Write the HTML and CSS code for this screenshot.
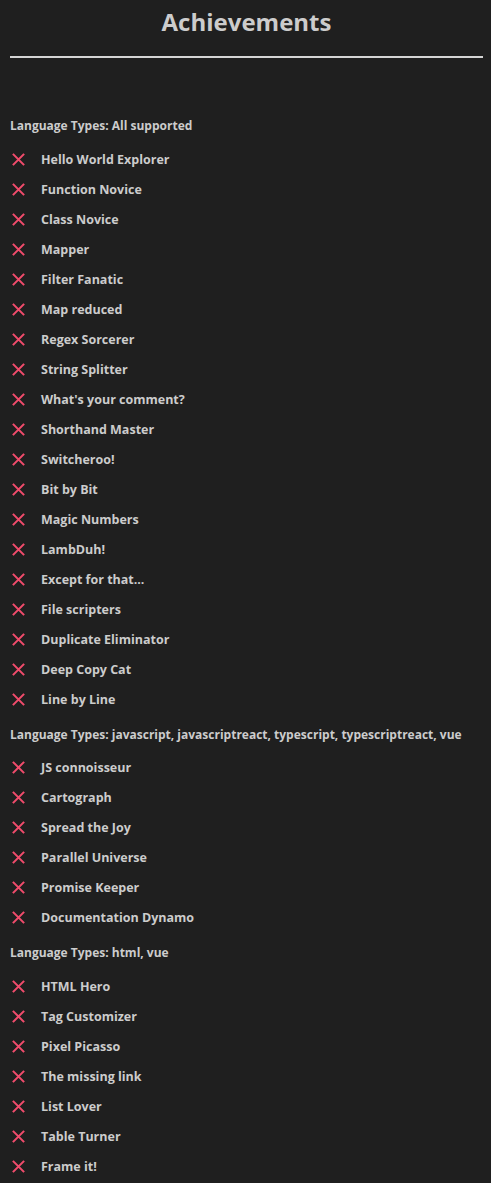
FILE: index.html
```html
<!DOCTYPE html>
<html>
<head>
<meta charset="utf-8">
<link rel="stylesheet" href="styles.css">
</head>
<body>
<main class="page">
  <h1 class="title">Achievements</h1>
  <div class="rule"></div>

  <section class="group">
    <h2 class="group-title">Language Types: All supported</h2>
    <ul class="list">
      <li class="item"><svg class="x" viewBox="0 0 16 16"><path d="M2 2l12 12M14 2L2 14"/></svg><span>Hello World Explorer</span></li>
      <li class="item"><svg class="x" viewBox="0 0 16 16"><path d="M2 2l12 12M14 2L2 14"/></svg><span>Function Novice</span></li>
      <li class="item"><svg class="x" viewBox="0 0 16 16"><path d="M2 2l12 12M14 2L2 14"/></svg><span>Class Novice</span></li>
      <li class="item"><svg class="x" viewBox="0 0 16 16"><path d="M2 2l12 12M14 2L2 14"/></svg><span>Mapper</span></li>
      <li class="item"><svg class="x" viewBox="0 0 16 16"><path d="M2 2l12 12M14 2L2 14"/></svg><span>Filter Fanatic</span></li>
      <li class="item"><svg class="x" viewBox="0 0 16 16"><path d="M2 2l12 12M14 2L2 14"/></svg><span>Map reduced</span></li>
      <li class="item"><svg class="x" viewBox="0 0 16 16"><path d="M2 2l12 12M14 2L2 14"/></svg><span>Regex Sorcerer</span></li>
      <li class="item"><svg class="x" viewBox="0 0 16 16"><path d="M2 2l12 12M14 2L2 14"/></svg><span>String Splitter</span></li>
      <li class="item"><svg class="x" viewBox="0 0 16 16"><path d="M2 2l12 12M14 2L2 14"/></svg><span>What's your comment?</span></li>
      <li class="item"><svg class="x" viewBox="0 0 16 16"><path d="M2 2l12 12M14 2L2 14"/></svg><span>Shorthand Master</span></li>
      <li class="item"><svg class="x" viewBox="0 0 16 16"><path d="M2 2l12 12M14 2L2 14"/></svg><span>Switcheroo!</span></li>
      <li class="item"><svg class="x" viewBox="0 0 16 16"><path d="M2 2l12 12M14 2L2 14"/></svg><span>Bit by Bit</span></li>
      <li class="item"><svg class="x" viewBox="0 0 16 16"><path d="M2 2l12 12M14 2L2 14"/></svg><span>Magic Numbers</span></li>
      <li class="item"><svg class="x" viewBox="0 0 16 16"><path d="M2 2l12 12M14 2L2 14"/></svg><span>LambDuh!</span></li>
      <li class="item"><svg class="x" viewBox="0 0 16 16"><path d="M2 2l12 12M14 2L2 14"/></svg><span>Except for that...</span></li>
      <li class="item"><svg class="x" viewBox="0 0 16 16"><path d="M2 2l12 12M14 2L2 14"/></svg><span>File scripters</span></li>
      <li class="item"><svg class="x" viewBox="0 0 16 16"><path d="M2 2l12 12M14 2L2 14"/></svg><span>Duplicate Eliminator</span></li>
      <li class="item"><svg class="x" viewBox="0 0 16 16"><path d="M2 2l12 12M14 2L2 14"/></svg><span>Deep Copy Cat</span></li>
      <li class="item"><svg class="x" viewBox="0 0 16 16"><path d="M2 2l12 12M14 2L2 14"/></svg><span>Line by Line</span></li>
    </ul>
  </section>

  <section class="group">
    <h2 class="group-title">Language Types: javascript, javascriptreact, typescript, typescriptreact, vue</h2>
    <ul class="list">
      <li class="item"><svg class="x" viewBox="0 0 16 16"><path d="M2 2l12 12M14 2L2 14"/></svg><span>JS connoisseur</span></li>
      <li class="item"><svg class="x" viewBox="0 0 16 16"><path d="M2 2l12 12M14 2L2 14"/></svg><span>Cartograph</span></li>
      <li class="item"><svg class="x" viewBox="0 0 16 16"><path d="M2 2l12 12M14 2L2 14"/></svg><span>Spread the Joy</span></li>
      <li class="item"><svg class="x" viewBox="0 0 16 16"><path d="M2 2l12 12M14 2L2 14"/></svg><span>Parallel Universe</span></li>
      <li class="item"><svg class="x" viewBox="0 0 16 16"><path d="M2 2l12 12M14 2L2 14"/></svg><span>Promise Keeper</span></li>
      <li class="item"><svg class="x" viewBox="0 0 16 16"><path d="M2 2l12 12M14 2L2 14"/></svg><span>Documentation Dynamo</span></li>
    </ul>
  </section>

  <section class="group">
    <h2 class="group-title">Language Types: html, vue</h2>
    <ul class="list">
      <li class="item"><svg class="x" viewBox="0 0 16 16"><path d="M2 2l12 12M14 2L2 14"/></svg><span>HTML Hero</span></li>
      <li class="item"><svg class="x" viewBox="0 0 16 16"><path d="M2 2l12 12M14 2L2 14"/></svg><span>Tag Customizer</span></li>
      <li class="item"><svg class="x" viewBox="0 0 16 16"><path d="M2 2l12 12M14 2L2 14"/></svg><span>Pixel Picasso</span></li>
      <li class="item"><svg class="x" viewBox="0 0 16 16"><path d="M2 2l12 12M14 2L2 14"/></svg><span>The missing link</span></li>
      <li class="item"><svg class="x" viewBox="0 0 16 16"><path d="M2 2l12 12M14 2L2 14"/></svg><span>List Lover</span></li>
      <li class="item"><svg class="x" viewBox="0 0 16 16"><path d="M2 2l12 12M14 2L2 14"/></svg><span>Table Turner</span></li>
      <li class="item"><svg class="x" viewBox="0 0 16 16"><path d="M2 2l12 12M14 2L2 14"/></svg><span>Frame it!</span></li>
    </ul>
  </section>
</main>
</body>
</html>
```

FILE: styles.css
```css
html, body {
  margin: 0;
  padding: 0;
  background: #1f1f1f;
}
body {
  color: #cccccc;
  font-family: "Open Sans", "Noto Sans", sans-serif;
}
.page {
  padding: 0 8px 0 10px;
}
.title {
  margin: 0;
  padding-top: 4px;
  height: 40px;
  text-align: center;
  font-size: 24px;
  font-weight: 700;
  line-height: 36px;
  color: #cccccc;
}
.rule {
  margin-top: 12px;
  height: 2px;
  background: #d4d4d4;
}
.group-title {
  margin: 0;
  font-size: 12px;
  font-weight: 700;
  line-height: 16px;
  height: 16px;
}
.group:first-of-type .group-title {
  margin-top: 60px;
}
.list {
  list-style: none;
  margin: 10px 0 12.5px 0;
  padding: 0;
  display: flex;
  flex-direction: column;
}
.item {
  display: flex;
  align-items: center;
  height: 30px;
  font-size: 12.5px;
  font-weight: 700;
}
.x {
  width: 15px;
  height: 15px;
  margin: 0 15px 0 1px;
  flex: none;
}
.x path {
  stroke: #f14c6c;
  stroke-width: 2.2;
  fill: none;
}
```
